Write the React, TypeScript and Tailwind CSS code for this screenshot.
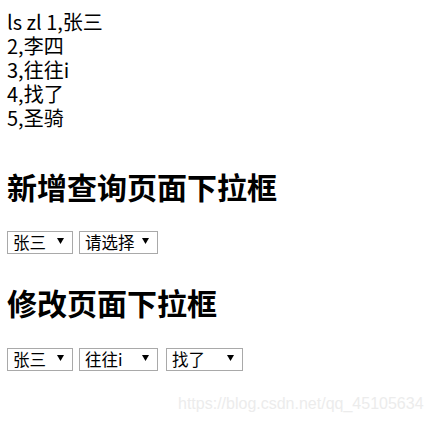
import type React from "react"

const font = { fontFamily: '"Microsoft YaHei", "Noto Sans CJK SC", "Noto Sans", sans-serif' }

const people = ["张三", "李四", "往往i", "找了", "圣骑"]

interface DropProps {
  value: string
  options: string[]
  width: string
}

// native select without the browser arrow, with a small black triangle over it
const Drop: React.FC<DropProps> = ({ value, options, width }) => (
  <div className={`relative inline-block ${width}`}>
    <select
      defaultValue={value}
      className="appearance-none w-full h-[23px] border border-[#a9a9a9] bg-white pl-[5px] pr-5 text-[16.5px] leading-[21px] text-black outline-none"
    >
      {options.map((o) => (
        <option key={o} value={o}>
          {o}
        </option>
      ))}
    </select>
    <svg className="absolute right-[9px] top-[8px] pointer-events-none" width="7" height="6" viewBox="0 0 7 6">
      <path d="M0 0 L7 0 L3.5 6 Z" fill="#000" />
    </svg>
  </div>
)

export default function App() {
  return (
    <div className="relative w-[431px] h-[422px] bg-white text-black overflow-hidden" style={font}>
      <div className="pl-[7px] pt-[10px]">
        <div className="text-[20px] leading-[24px]">
          <div>ls zl 1,张三</div>
          <div>2,李四</div>
          <div>3,往往i</div>
          <div>4,找了</div>
          <div>5,圣骑</div>
        </div>

        <h2 className="mt-[38px] text-[30px] leading-[36px] font-bold">新增查询页面下拉框</h2>
        <div className="mt-[26px] flex gap-[6px]">
          <Drop value="张三" options={people} width="w-[66px]" />
          <Drop value="" options={["请选择", ...people]} width="w-[79px]" />
        </div>

        <h2 className="mt-[30px] text-[30px] leading-[36px] font-bold">修改页面下拉框</h2>
        <div className="mt-[27px] flex">
          <Drop value="张三" options={people} width="w-[66px]" />
          <div className="ml-[6px]">
            <Drop value="往往i" options={people} width="w-[79px]" />
          </div>
          <div className="ml-[8px]">
            <Drop value="找了" options={people} width="w-[77px]" />
          </div>
        </div>
      </div>

      {/* csdn watermark */}
      <div
        className="absolute left-[178px] top-[392px] text-[16px] text-[#ececec]"
        style={{ fontFamily: '"Liberation Sans", Arial, sans-serif' }}
      >
        https://blog.csdn.net/qq_45105634
      </div>
    </div>
  )
}
